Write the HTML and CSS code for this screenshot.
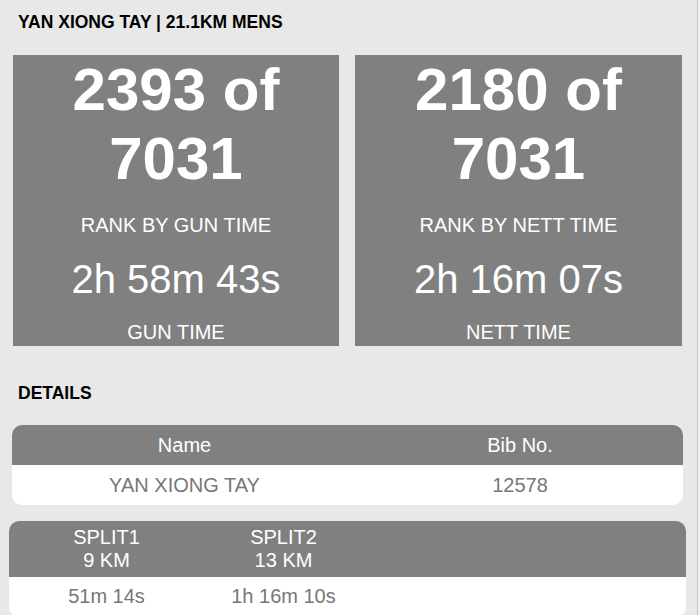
FILE: index.html
```html
<!DOCTYPE html>
<html>

<head>
    <title>Result - YAN XIONG TAY</title>
    <link rel="stylesheet" href="styles.css">
</head>

<body>
    <div class="page">

        <h3 class="heading">YAN XIONG TAY | 21.1KM MENS</h3>

        <!-- Rank cards -->
        <div class="cards">
            <div class="card">
                <div class="big">2393 of<br>7031</div>
                <div class="label">RANK BY GUN TIME</div>
                <div class="time">2h 58m 43s</div>
                <div class="label last">GUN TIME</div>
            </div>
            <div class="card">
                <div class="big">2180 of<br>7031</div>
                <div class="label">RANK BY NETT TIME</div>
                <div class="time">2h 16m 07s</div>
                <div class="label last">NETT TIME</div>
            </div>
        </div>

        <h3 class="heading details-title">DETAILS</h3>

        <!-- Runner details -->
        <div class="table info">
            <div class="row head">
                <div class="cell">Name</div>
                <div class="cell">Bib No.</div>
            </div>
            <div class="row">
                <div class="cell">YAN XIONG TAY</div>
                <div class="cell">12578</div>
            </div>
        </div>

        <!-- Splits -->
        <div class="table splits">
            <div class="row head">
                <div class="cell">SPLIT1<br>9 KM</div>
                <div class="cell">SPLIT2<br>13 KM</div>
            </div>
            <div class="row">
                <div class="cell">51m 14s</div>
                <div class="cell">1h 16m 10s</div>
            </div>
        </div>

    </div>
</body>

</html>
```

FILE: styles.css
```css
html {
    background-color: #efefef;
    overflow: hidden;
}

body {
    margin: 0;
    font-family: "Liberation Sans", Arial, sans-serif;
}

.page {
    width: 697px;
    min-height: 700px;
    background-color: #e8e8e8;
    border-right: 1px solid #c4c4c4;
    padding-top: 12px;
}

.heading {
    margin: 0 0 0 18px;
    font-size: 17.5px;
    line-height: 20px;
    font-weight: bold;
    color: #000;
}

.cards {
    display: grid;
    grid-template-columns: 326px 327px;
    gap: 16px;
    margin: 23px 0 0 13px;
}

.card {
    background-color: #808080;
    color: #fff;
    text-align: center;
    padding-bottom: 2px;
}

.big {
    font-size: 60px;
    font-weight: bold;
    line-height: 69px;
    margin-bottom: 21px;
}

.label {
    font-size: 20px;
    line-height: 23px;
    margin-bottom: 19px;
}

.label.last {
    margin-bottom: 0;
}

.time {
    font-size: 40px;
    line-height: 46px;
    margin-bottom: 19px;
}

.details-title {
    margin-top: 37px;
}

.table {
    background-color: #fff;
    border-radius: 10px;
    overflow: hidden;
    font-size: 20px;
    line-height: 23px;
    color: #777;
    text-align: center;
}

.row {
    display: flex;
}

.row.head {
    background-color: #808080;
    color: #fff;
}

.info {
    width: 671px;
    margin: 22px 0 0 12px;
}

.info .cell {
    padding: 8.5px 0;
}

.info .cell:first-child {
    width: 345px;
}

.info .cell:last-child {
    width: 326px;
}

.splits {
    width: 677px;
    margin: 16px 0 0 9px;
}

.splits .row {
    padding-left: 9px;
}

.splits .head .cell {
    padding: 5px 0;
}

.splits .cell {
    width: 177px;
    padding: 7.5px 0 9px;
}
```
